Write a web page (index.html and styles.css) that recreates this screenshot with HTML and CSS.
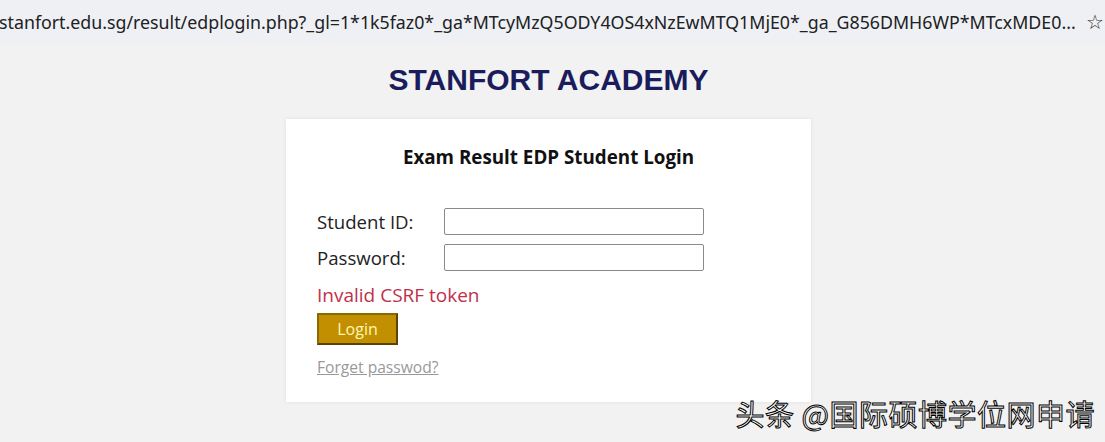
FILE: index.html
```html
<!DOCTYPE html>
<html>
<head>
	<title>Stanfort Academy - EDP Login</title>
	<meta charset="utf-8">
	<link rel="stylesheet" href="styles.css">
</head>
<body>
	<div class="urlbar">
		<span class="url">stanfort.edu.sg/result/edplogin.php?_gl=1*1k5faz0*_ga*MTcyMzQ5ODY4OS4xNzEwMTQ1MjE0*_ga_G856DMH6WP*MTcxMDE0...</span>
		<span class="star">☆</span>
	</div>
	<div class="page">
		<h1 class="logo">STANFORT ACADEMY</h1>
		<div class="card">
			<h2>Exam Result EDP Student Login</h2>
			<form class="login">
				<div class="row">
					<label>Student ID:</label>
					<input type="text">
				</div>
				<div class="row">
					<label>Password:</label>
					<input type="password">
				</div>
				<p class="err">Invalid CSRF token</p>
				<button type="button" class="btn">Login</button>
				<a class="forget" href="#">Forget passwod?</a>
			</form>
		</div>
	</div>
	<div class="mark">头条 @国际硕博学位网申请</div>
</body>
</html>
```

FILE: styles.css
```css
*{margin: 0;padding: 0;box-sizing: border-box;}
html,body{width: 100%;height: 100%;}
body{background-color: #f2f2f2;font-family: "Open Sans","Noto Sans",sans-serif;color: #222;position: relative;overflow: hidden;}
.urlbar{height: 44px;background-color: #eef0f3;display: flex;align-items: center;justify-content: space-between;white-space: nowrap;overflow: hidden;padding-right: 1px;}
.url{font-family: "Noto Sans","Open Sans",sans-serif;font-size: 17.8px;color: #202124;margin-left: -1px;}
.star{font-family: "DejaVu Sans",sans-serif;font-size: 20px;color: #333;font-weight: bold;}
.page{width: 1097px;padding-top: 18px;}
.logo{font-family: "Liberation Sans",Arial,sans-serif;font-size: 30px;font-weight: bold;color: #1a1c5c;text-align: center;line-height: 36px;}
.card{width: 525px;height: 283px;margin: 21px auto 0;background-color: #fff;box-shadow: 0 0 4px rgba(0,0,0,0.08);padding: 25px 31px 0;}
.card h2{font-size: 18.8px;font-weight: bold;text-align: center;line-height: 26px;color: #111;}
.login{margin-top: 38px;display: flex;flex-direction: column;align-items: flex-start;}
.row{display: flex;align-items: center;margin-bottom: 9px;}
.row label{width: 127px;font-size: 18.6px;color: #222;}
.row input{width: 260px;height: 27px;border: 1px solid #8a8a8a;border-radius: 2px;background: #fff;}
.err{color: #c0304a;font-size: 19px;line-height: 24px;margin-top: 3px;}
.btn{margin-top: 6px;width: 81px;height: 32px;background-color: #c28f00;border: 2px solid #5a4400;border-left-color: #8a6a00;border-top-color: #8a6a00;color: #fff7b0;font-family: "Open Sans",sans-serif;font-size: 16px;}
.forget{margin-top: 11px;font-size: 15.6px;color: #999;text-decoration: underline;}
.mark{position: absolute;right: 10px;bottom: 8px;font-family: "Noto Sans CJK SC",sans-serif;font-size: 29px;color: #fff;-webkit-text-stroke: 1px #000;letter-spacing: 0.5px;}
```
